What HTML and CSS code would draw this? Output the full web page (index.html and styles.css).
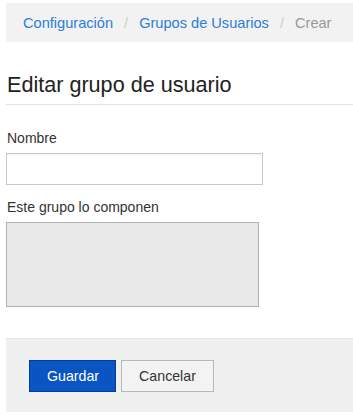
FILE: index.html
```html
<!DOCTYPE html>
<html lang="es">
<head>
<meta charset="utf-8">
<title>Editar grupo de usuario</title>
<link rel="stylesheet" href="styles.css">
</head>
<body>
<div class="page">
  <nav class="breadcrumb">
    <a href="#">Configuración</a>
    <span class="sep">/</span>
    <a href="#">Grupos de Usuarios</a>
    <span class="sep">/</span>
    <span class="current">Crear</span>
  </nav>

  <h1 class="title">Editar grupo de usuario</h1>

  <form class="form">
    <label class="label" for="nombre">Nombre</label>
    <input class="input" id="nombre" type="text">

    <label class="label label-second">Este grupo lo componen</label>
    <div class="members"></div>

    <div class="actions">
      <button type="button" class="btn btn-primary">Guardar</button>
      <button type="button" class="btn btn-default">Cancelar</button>
    </div>
  </form>
</div>
</body>
</html>
```

FILE: styles.css
```css
html, body {
  margin: 0;
  padding: 0;
  background: #ffffff;
}

body {
  font-family: "Liberation Sans", Arial, sans-serif;
  font-size: 14px;
  line-height: 20px;
  color: #333333;
}

.page {
  padding: 3px 0 0 6px;
  width: 360px;
}

.breadcrumb {
  display: flex;
  align-items: center;
  height: 39px;
  padding-left: 17px;
  background: #f2f2f2;
  font-size: 14.6px;
  white-space: nowrap;
}

.breadcrumb a {
  color: #2a7fd6;
  text-decoration: none;
}

.breadcrumb .sep {
  color: #cccccc;
  padding: 0 11px;
}

.breadcrumb .current {
  color: #999999;
}

.title {
  margin: 31px 0 0 0;
  padding: 0 0 7px 1px;
  font-size: 21.6px;
  line-height: 24px;
  font-weight: normal;
  color: #222222;
  border-bottom: 1px solid #e3e3e3;
}

.form {
  display: flex;
  flex-direction: column;
  align-items: flex-start;
}

.label {
  display: block;
  margin: 23px 0 0 1px;
  font-size: 14px;
  line-height: 20px;
  color: #333333;
}

.label-second {
  margin-top: 12px;
}

.input {
  box-sizing: border-box;
  margin: 5px 0 0 0;
  width: 257px;
  height: 32px;
  border: 1px solid #c8c8c8;
  box-shadow: inset 0 1px 1px rgba(0,0,0,0.05);
  background: #ffffff;
  padding: 4px 8px;
  font: inherit;
}

.members {
  box-sizing: border-box;
  margin-top: 5px;
  width: 253px;
  height: 85px;
  background: #e9e9e9;
  border: 1px solid #b2b2b2;
}

.actions {
  box-sizing: border-box;
  align-self: stretch;
  display: flex;
  gap: 5px;
  margin-top: 31px;
  height: 74px;
  padding: 21px 0 0 23px;
  background: #f0f0f0;
  border-top: 1px solid #e6e6e6;
}

.btn {
  box-sizing: border-box;
  height: 32px;
  padding: 0 17px;
  font-family: "Liberation Sans", Arial, sans-serif;
  font-size: 14.2px;
  line-height: 30px;
  cursor: pointer;
}

.btn-primary {
  width: 87px;
  background: #0a55c2;
  border: 1px solid #003e9e;
  color: #ffffff;
}

.btn-default {
  width: 93px;
  background: #f3f3f3;
  border: 1px solid #b8b8b8;
  color: #333333;
}
```
